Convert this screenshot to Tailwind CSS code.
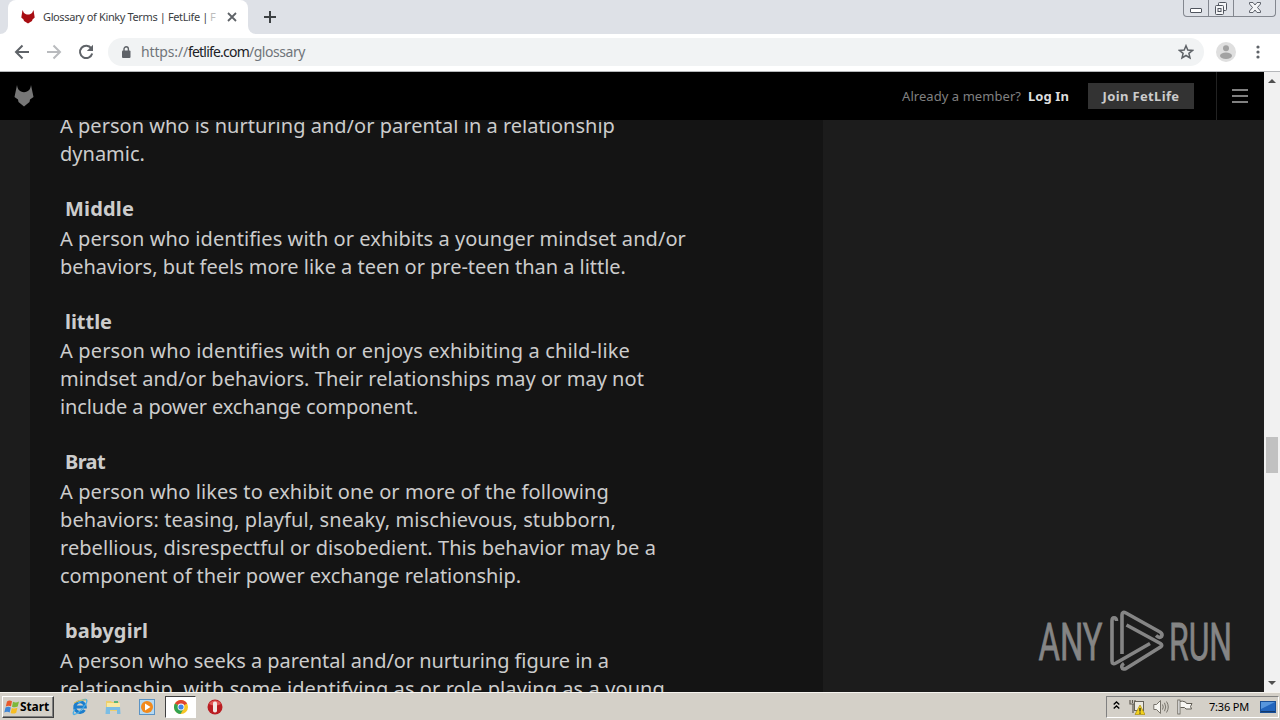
<!DOCTYPE html>
<html lang="en">
<head>
<meta charset="utf-8">
<title>Glossary of Kinky Terms | FetLife</title>
<script src="https://cdn.jsdelivr.net/npm/@tailwindcss/browser@4"></script>
</head>
<body class="w-[1280px] h-[720px] overflow-hidden bg-[#1c1c1c] font-['Noto_Sans',sans-serif]">
<div class="relative flex flex-col w-[1280px] h-[720px]">

  <!-- Tab strip -->
  <div class="flex h-[34px] shrink-0 bg-[#dee1e7]">
    <div class="flex items-end w-2"><div class="w-2 h-2 bg-white"><div class="w-2 h-2 bg-[#dee1e7] rounded-br-lg"></div></div></div>
    <div class="flex items-center w-[240px] h-full bg-white rounded-t-lg pl-[13px]">
      <svg class="w-[14px] h-[14px] shrink-0" viewBox="0 0 14 14"><path d="M1.500 0Q2.500 3.500 5 4.200Q7 4.800 9 4.200Q11.500 3.500 12.500 0L13.700 7.500L11.500 9.500L11 11L7 13.500L3 11L2.500 9.500L.3 7.500Z" fill="#a80d12"/></svg>
      <div class="ml-2 w-[177px] h-4 overflow-hidden whitespace-nowrap text-[11px] leading-4 text-[#3c4043]"><span data-w="165">Glossary of Kinky Terms | FetLife |</span><span class="text-[#bdbdbd] ml-[2px]">F</span></div>
      <svg class="w-[10px] h-[10px] shrink-0 ml-[7px]" viewBox="0 0 10 10"><path d="M1 1L9 9M9 1L1 9" stroke="#5f6368" stroke-width="1.8"/></svg>
    </div>
    <div class="flex items-end w-2"><div class="w-2 h-2 bg-white"><div class="w-2 h-2 bg-[#dee1e7] rounded-bl-lg"></div></div></div>
    <svg class="w-3 h-3 ml-2 mt-[11px]" viewBox="0 0 12 12"><path d="M6 0V12M0 6H12" stroke="#3c4043" stroke-width="2"/></svg>
    <div class="ml-auto mr-1 flex h-[17px] w-[93px] border border-t-0 border-[#83878f] rounded-b-[4px]">
      <div class="w-[25px] border-r border-[#83878f] flex justify-center items-end pb-[3px]"><div class="w-3 h-[5px] border border-[#50555e] bg-white rounded-[1px]"></div></div>
      <div class="w-[25px] border-r border-[#83878f] flex justify-center items-start pt-[2px]"><svg class="w-[14px] h-[13px]" viewBox="0 0 14 13"><g fill="#f4f5f7" stroke="#50555e"><rect x="4.500" y=".5" width="8" height="8" rx="1"/><rect x="1.500" y="3.500" width="8" height="9" rx="1"/><rect x="4" y="6.500" width="3" height="3"/></g></svg></div>
      <div class="flex-1 flex justify-center pt-[2px]"><svg class="w-3 h-[11px]" viewBox="0 0 12 11"><path d="M.5 .5H4L6 3L8 .5H11.500V2L8.500 5.500L11.500 9V10.500H8L6 8L4 10.500H.5V9L3.500 5.500L.5 2Z" fill="#f4f5f7" stroke="#50555e" stroke-width=".9"/></svg></div>
    </div>
  </div>

  <!-- Address bar -->
  <div class="flex items-center h-[38px] shrink-0 bg-white border-b border-[#b5b7ba] pl-[14px]">
    <svg class="w-4 h-4 -mt-px" viewBox="0 0 16 16" fill="none" stroke="#5f6368" stroke-width="2"><path d="M15 8H2.500M8.500 1.500L2 8L8.500 14.500"/></svg>
    <svg class="w-4 h-4 ml-4 -mt-px" viewBox="0 0 16 16" fill="none" stroke="#b9bbbe" stroke-width="2"><path d="M1 8H13.500M7.500 1.500L14 8L7.500 14.500"/></svg>
    <svg class="w-4 h-4 ml-4 -mt-px" viewBox="0 0 16 16" fill="none" stroke="#5f6368" stroke-width="2"><path d="M13.300 4.300A6.200 6.200 0 1 0 14.200 9.500"/><path d="M15 .8V7H8.800Z" fill="#5f6368" stroke="none"/></svg>
    <div class="flex items-center ml-[14px] -mt-px w-[1096px] h-7 rounded-full bg-[#f1f3f4] pl-[13px] pr-[10px]">
      <svg class="w-[10px] h-3" viewBox="0 0 10 12"><rect x="1" y="4.500" width="8.500" height="7.500" rx="1" fill="#5f6368"/><path d="M3 5V3a2.200 2.200 0 0 1 4.400 0V5" fill="none" stroke="#5f6368" stroke-width="1.400"/></svg>
      <div class="ml-[10px] text-[14px] leading-5 whitespace-nowrap text-[#70757a]"><span data-w="47">https://</span><span class="text-[#202124]" data-w="61">fetlife.com</span><span data-w="56">/glossary</span></div>
      <svg class="w-[16px] h-[16px] ml-auto" viewBox="0 0 16 16"><path d="M8 1.700L9.800 6L14.500 6.400L10.900 9.400L12 14L8 11.500L4 14L5.100 9.400L1.500 6.400L6.200 6Z" fill="none" stroke="#5f6368" stroke-width="1.500"/></svg>
    </div>
    <svg class="w-5 h-5 ml-3 -mt-px" viewBox="0 0 20 20"><circle cx="10" cy="10" r="10" fill="#dfdfdf"/><circle cx="10" cy="6.200" r="3" fill="#a2a2a2"/><ellipse cx="10" cy="13.800" rx="6" ry="3.200" fill="#a2a2a2"/></svg>
    <svg class="w-1 h-[14px] ml-5 -mt-px" viewBox="0 0 4 14" fill="#5f6368"><circle cx="2" cy="2" r="1.600"/><circle cx="2" cy="7" r="1.600"/><circle cx="2" cy="12" r="1.600"/></svg>
  </div>

  <!-- Web page -->
  <div class="flex h-[620px] shrink-0">
    <div class="w-[1264px] flex flex-col h-full overflow-hidden">
      <div class="flex items-center h-12 shrink-0 bg-black pl-[14px]">
        <svg class="w-5 h-[22px]" viewBox="0 0 20 22"><path d="M3 0Q3.500 5 7 6.500Q10 7.800 13 6.500Q16.500 5 17 0L19.500 12L16 14.500L15.500 17L10 21.500L4.500 17L4 14.500L.5 12Z" fill="#777"/></svg>
        <div class="ml-auto pt-px text-[13px] text-[#808080] whitespace-nowrap"><span data-w="119">Already a member?</span></div>
        <div class="ml-[7px] pt-px text-[13px] font-bold text-[#ddd] whitespace-nowrap"><span data-w="41">Log In</span></div>
        <div class="ml-[19px] pt-px flex items-center justify-center w-[106px] h-[26px] bg-[#333] text-[13px] font-bold text-[#ccc] whitespace-nowrap"><span data-w="77">Join FetLife</span></div>
        <div class="ml-[22px] flex items-center w-[48px] h-full border-l border-[#222] pl-[15px]">
          <div class="flex flex-col gap-1 w-4"><div class="h-[2px] bg-[#808080]"></div><div class="h-[2px] bg-[#808080]"></div><div class="h-[2px] bg-[#808080]"></div></div>
        </div>
      </div>
      <div class="h-[572px] overflow-hidden bg-[#1c1c1c] pl-[30px]">
        <dl class="w-[793px] h-[572px] overflow-hidden bg-[#141414] pl-[30px] text-[20px] leading-7 text-[#ccc] whitespace-nowrap">
          <dd class="-mt-2"><span data-w="555">A person who is nurturing and/or parental in a relationship</span><br><span data-w="85">dynamic.</span></dd>
          <dt class="mt-[27px] pl-[5px] font-bold"><span data-w="69">Middle</span></dt>
          <dd class="mt-0.5"><span data-w="626">A person who identifies with or exhibits a younger mindset and/or</span><br><span data-w="566">behaviors, but feels more like a teen or pre-teen than a little.</span></dd>
          <dt class="mt-[27px] pl-[5px] font-bold"><span data-w="47">little</span></dt>
          <dd class="mt-px"><span data-w="570">A person who identifies with or enjoys exhibiting a child-like</span><br><span data-w="584">mindset and/or behaviors. Their relationships may or may not</span><br><span data-w="358">include a power exchange component.</span></dd>
          <dt class="mt-[27px] pl-[5px] font-bold"><span data-w="40">Brat</span></dt>
          <dd class="mt-0.5"><span data-w="549">A person who likes to exhibit one or more of the following</span><br><span data-w="556">behaviors: teasing, playful, sneaky, mischievous, stubborn,</span><br><span data-w="596">rebellious, disrespectful or disobedient. This behavior may be a</span><br><span data-w="461">component of their power exchange relationship.</span></dd>
          <dt class="mt-[27px] pl-[5px] font-bold"><span data-w="83">babygirl</span></dt>
          <dd class="mt-0.5"><span data-w="549">A person who seeks a parental and/or nurturing figure in a</span><br><span data-w="605">relationship, with some identifying as or role playing as a young</span></dd>
        </dl>
      </div>
    </div>
    <div class="flex flex-col items-center w-4 h-full bg-[#f1f1f1]">
      <svg class="w-2 h-1 mt-[7px]" viewBox="0 0 8 4"><path d="M0 4L4 0L8 4Z" fill="#505050"/></svg>
      <div class="w-3 h-9 mt-[354px] bg-[#c1c1c1]"></div>
      <svg class="w-2 h-1 mt-auto mb-[7px]" viewBox="0 0 8 4"><path d="M0 0L4 4L8 0Z" fill="#505050"/></svg>
    </div>
  </div>

  <!-- Taskbar -->
  <div class="flex items-center h-7 shrink-0 bg-[#d4d0c8] border-t border-[#f5f3ee] pl-[2px] pt-px">
    <div class="flex items-center w-[52px] h-[22px] bg-[#d4d0c8] border border-t-white border-l-white border-r-[#404040] border-b-[#404040] shadow-[inset_-1px_-1px_0_#808080] pl-px">
      <svg class="w-4 h-4 shrink-0" viewBox="0 0 16 16"><path d="M3 2.500Q5.500 .8 8 2.300L7 7.300Q4.500 6 1.800 7.500Z" fill="#e8592b"/><path d="M9 2.800Q12 4.200 15 2.500L13.700 7.500Q11 9 8 7.800Z" fill="#7db83a"/><path d="M1.500 8.600Q4.300 7.200 6.800 8.500L5.700 13.500Q3 12 .3 13.600Z" fill="#3f86d6"/><path d="M7.800 9Q10.500 10.200 13.400 8.800L12.200 13.700Q9.500 15.300 6.700 14Z" fill="#f7bd23"/></svg>
      <span class="text-[12px] leading-4 font-bold text-black" data-w="29">Start</span>
    </div>
    <svg class="w-[18px] h-[18px] ml-[17px]" viewBox="0 0 18 18"><path d="M13.500 12A5.300 5.300 0 1 1 14.300 9H5" fill="none" stroke="#1c7dcc" stroke-width="3"/><path d="M4 11Q1 16 3 16.500Q8 16 15 6Q17 1.500 14.500 1.500Q11 1.500 7 5" fill="none" stroke="#47aee8" stroke-width="1.300"/><path d="M3 5Q9 1 15 2" fill="none" stroke="#e9c14a" stroke-width="1"/></svg>
    <svg class="w-4 h-4 ml-[16px]" viewBox="0 0 16 16"><path d="M1 2H6L7 3H14V12H1Z" fill="#edcf6c"/><path d="M2 4H15V10H2Z" fill="#f8e9a4"/><path d="M1 8H15L15.500 15H12V11H5V15H.5Z" fill="#7bbde4"/><rect x="9" y="2" width="4" height="2" fill="#5ab578"/></svg>
    <svg class="w-4 h-4 ml-[18px]" viewBox="0 0 16 16"><rect x=".5" y=".5" width="15" height="15" fill="#b5d9f2" stroke="#5b93c4"/><circle cx="8" cy="8" r="6" fill="#f28a1c"/><path d="M6 4.500L11.500 8L6 11.500Z" fill="#fff"/></svg>
    <div class="flex items-center justify-center w-[31px] h-[22px] ml-[10px] bg-white border border-t-[#404040] border-l-[#404040] border-r-white border-b-white">
      <svg class="w-[14px] h-[14px]" viewBox="0 0 14 14"><circle cx="7" cy="7" r="7" fill="#f8c626"/><path d="M7 7L.94 3.500A7 7 0 0 1 13.060 3.500Z" fill="#df4432"/><path d="M7 7L.94 3.500A7 7 0 0 0 6.500 14L9.500 9Z" fill="#32a350"/><circle cx="7" cy="7" r="3.400" fill="#fff"/><circle cx="7" cy="7" r="2.600" fill="#4285e8"/></svg>
    </div>
    <svg class="w-4 h-4 ml-[11px]" viewBox="0 0 16 16"><circle cx="8" cy="8" r="7.500" fill="#ba1d22"/><path d="M2 5A7 7 0 0 1 14 5Q8 8 2 5Z" fill="#e15a58"/><rect x="6" y="2.500" width="4" height="11" rx="1.800" fill="#f3e9e6"/></svg>
    <div class="ml-auto mr-px flex items-center w-[173px] h-[22px] border border-t-[#808080] border-l-[#808080] border-r-white border-b-white pl-[6px]">
      <svg class="w-[7px] h-2 -mt-1" viewBox="0 0 7 8" fill="none" stroke="#000" stroke-width="1.300"><path d="M.7 3.500L3.500 .9L6.300 3.500M.7 7.500L3.500 4.900L6.300 7.500"/></svg>
      <svg class="w-4 h-4 ml-[9px]" viewBox="0 0 16 16"><path d="M1 1V5H4V14M6 1V5H3M3.500 1V4" fill="none" stroke="#605c54" stroke-width="1.200"/><rect x="5.500" y="2.500" width="9" height="9" fill="#ece9e0" stroke="#67635a"/><path d="M11 6L16 15.500H6Z" fill="#f3d21c" stroke="#a98c10" stroke-width=".7"/><path d="M11 9V12.500M11 13.500V14.700" stroke="#222" stroke-width="1.200"/></svg>
      <svg class="w-4 h-4 ml-2" viewBox="0 0 16 16" fill="none" stroke="#77736b"><path d="M.8 5.500H3.500L7.500 1.500V14.500L3.500 10.500H.8Z" fill="#f7f5f0"/><path d="M9.500 5.500Q11 8 9.500 10.500M11.500 3.800Q14 8 11.500 12.200M13.500 2.500Q17 8 13.500 13.500"/></svg>
      <svg class="w-4 h-4 ml-2" viewBox="0 0 16 16"><path d="M2.500 2.500Q5 1.500 8.500 3L9.500 4.500H15L13.500 7.500L14.500 10H9L7.500 8.500H3.500" fill="#f8f7f3" stroke="#605c54"/><rect x=".8" y="1" width="2.200" height="14" fill="#eee" stroke="#605c54" stroke-width=".8"/></svg>
      <div class="ml-4 text-[11px] leading-4 text-black whitespace-nowrap"><span data-w="40">7:36 PM</span></div>
      <svg class="w-4 h-3 ml-[11px]" viewBox="0 0 16 12"><rect x=".5" y=".5" width="15" height="11" fill="#2265bd" stroke="#194f96"/><path d="M1 1H15L1 8Z" fill="#5796dd"/><path d="M1 10.500H15" stroke="#14396b"/></svg>
    </div>
  </div>

  <!-- Watermark over the page -->
  <svg class="absolute left-[1030px] top-[600px] w-[210px] h-[80px]" viewBox="0 0 210 80">
    <g fill="#858585" stroke="#858585" stroke-width=".8" font-family="Roboto, sans-serif" font-size="52">
      <text x="8.500" y="59.500" textLength="64" lengthAdjust="spacingAndGlyphs">ANY</text>
      <text x="139" y="59.500" textLength="63" lengthAdjust="spacingAndGlyphs">RUN</text>
    </g>
    <g fill="none" stroke="#858585" stroke-width="3.600" stroke-linejoin="round">
      <path d="M86.500 21Q86.500 17.800 84 17.800Q82 17.800 82 21V61Q82 65 86 63L120 43.500"/>
      <path d="M92 54V15Q92 11 96 13L130 32Q133 34 131.500 36.500Q129.500 38.500 126 35.500"/>
      <path d="M96.500 25L130.500 43.500Q133 45 130.500 47L96 68.500Q92.500 70 91.800 67Q91.500 65 94 63.500"/>
    </g>
  </svg>
</div>
<script>
  function fitLines() {
    var items = Array.from(document.querySelectorAll('[data-w]'));
    items.forEach(function (el) { el.style.letterSpacing = '0.001px'; });
    var widths = items.map(function (el) { return el.getBoundingClientRect().width; });
    items.forEach(function (el, i) {
      el.style.letterSpacing = ((el.dataset.w - widths[i]) / el.textContent.length) + 'px';
    });
  }
  fitLines();
  window.addEventListener('load', function () {
    fitLines();
    requestAnimationFrame(fitLines);
    document.fonts.ready.then(fitLines);
    setTimeout(fitLines, 50);
  });
</script>
</body>
</html>
